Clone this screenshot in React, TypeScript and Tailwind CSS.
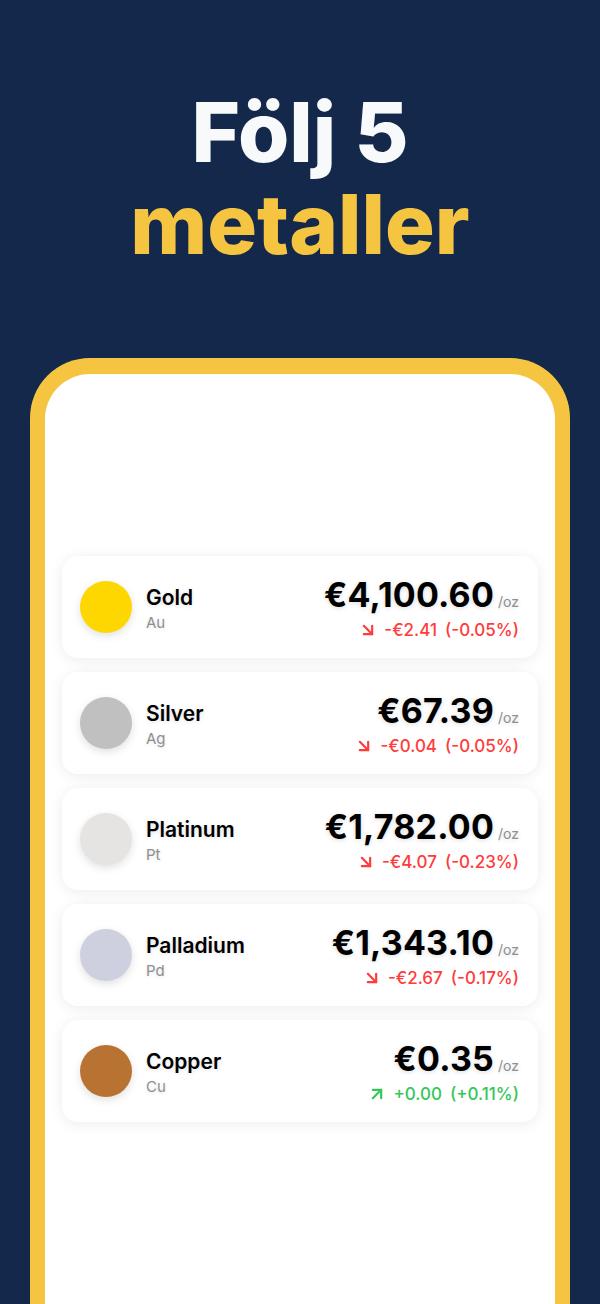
import { ArrowDownRight, ArrowUpRight } from 'lucide-react';

interface Metal {
    name: string;
    symbol: string;
    color: string;
    price: string;
    change: string;
    percent: string;
    up: boolean;
}

const METALS: Metal[] = [
    { name: 'Gold', symbol: 'Au', color: 'bg-[#ffd700]', price: '€4,100.60', change: '-€2.41', percent: '(-0.05%)', up: false },
    { name: 'Silver', symbol: 'Ag', color: 'bg-[#c0c0c0]', price: '€67.39', change: '-€0.04', percent: '(-0.05%)', up: false },
    { name: 'Platinum', symbol: 'Pt', color: 'bg-[#e5e4e2]', price: '€1,782.00', change: '-€4.07', percent: '(-0.23%)', up: false },
    { name: 'Palladium', symbol: 'Pd', color: 'bg-[#ced0df]', price: '€1,343.10', change: '-€2.67', percent: '(-0.17%)', up: false },
    { name: 'Copper', symbol: 'Cu', color: 'bg-[#b87333]', price: '€0.35', change: '+0.00', percent: '(+0.11%)', up: true },
];

function MetalCard({ metal }: { metal: Metal }) {
    const tone = metal.up ? 'text-[#34c759]' : 'text-[#ff3b3b]';
    return (
        <div className="flex items-center h-[102px] pl-[18px] pr-[19px] bg-white rounded-[16px] shadow-[0_2px_14px_rgba(0,0,0,0.08)]">
            <div className={`w-[52px] h-[52px] rounded-full shrink-0 shadow-[0_3px_8px_rgba(0,0,0,0.12)] ${metal.color}`} />
            <div className="flex flex-col ml-[14px] mt-[4px] [text-shadow:0_1px_4px_rgba(0,0,0,0.12)]">
                <span className="text-[21px] leading-[24px] font-semibold text-black">{metal.name}</span>
                <span className="text-[15px] leading-[20px] text-[#8e8e93] mt-[3px]">{metal.symbol}</span>
            </div>
            <div className="ml-auto flex flex-col items-end">
                <div className="flex items-baseline [text-shadow:0_1px_5px_rgba(0,0,0,0.15)]">
                    <span className="text-[34px] leading-[40px] font-bold text-black tracking-[0.2px]">{metal.price}</span>
                    <span className="text-[14px] text-[#8e8e93] ml-[4px]">/oz</span>
                </div>
                <div className={`flex items-center gap-[8px] text-[17px] leading-[20px] font-medium mt-[5px] ${tone}`}>
                    {metal.up ? (
                        <ArrowUpRight className="w-[20px] h-[20px] -mr-[2px]" strokeWidth={2.6} />
                    ) : (
                        <ArrowDownRight className="w-[20px] h-[20px] -mr-[2px]" strokeWidth={2.6} />
                    )}
                    <span>{metal.change}</span>
                    <span>{metal.percent}</span>
                </div>
            </div>
        </div>
    );
}

export default function App() {
    return (
        <div className="w-[600px] h-[1304px] overflow-hidden bg-[#13284a] flex flex-col font-['Inter',sans-serif]">
            <div className="flex flex-col items-center pt-[86px] text-[83px] leading-[92px] font-extrabold">
                <span className="text-[#f8f9fb]">Följ 5</span>
                <span className="text-[#f5c542]">metaller</span>
            </div>

            <div className="flex-1 mx-[30px] mt-[88px] bg-[#f5c542] rounded-t-[60px] px-[15px] pt-[16px]">
                <div className="h-full bg-white rounded-t-[45px] px-[17px] pt-[182px]">
                    <div className="flex flex-col gap-[14px]">
                        {METALS.map(m => (
                            <MetalCard key={m.name} metal={m} />
                        ))}
                    </div>
                </div>
            </div>
        </div>
    );
}
